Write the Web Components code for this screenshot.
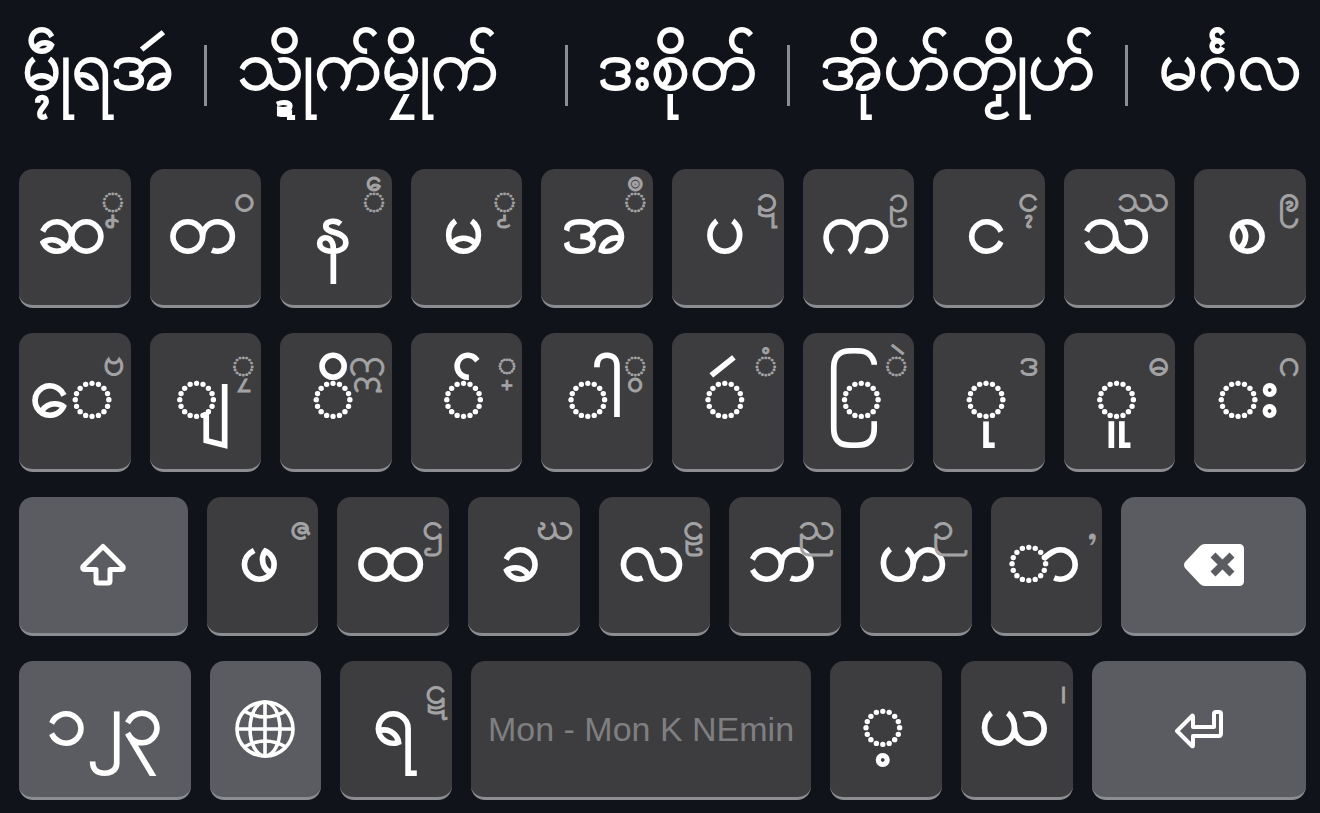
<!DOCTYPE html>
<html lang="mnw">
<head>
<meta charset="utf-8">
<title>Mon keyboard</title>
<style>
  html { background: #10131a; }
  body { margin: 0; font-family: "Padauk", "Noto Sans", sans-serif; color: #fff; }
</style>
</head>
<body>
<mon-keyboard></mon-keyboard>
<script>
const ICONS = {
  shift: '<svg width="48" height="44" viewBox="0 0 48 44" fill="none" stroke="#fff" stroke-width="5" stroke-linejoin="round"><path d="M24 3.500 L44 23.500 Q45 26.500 42 26.500 H31 V38 Q31 40 29 40 H19 Q17 40 17 38 V26.500 H6 Q3 26.500 4 23.500 Z"/></svg>',
  back: '<svg width="60" height="42" viewBox="0 0 60 42"><path fill="#fff" d="M21 0 H55 Q60 0 60 5 V37 Q60 42 55 42 H21 Q18 42 16 40 L1 24 Q-1 21 1 18 L16 2 Q18 0 21 0 Z"/><path stroke="#5b5c61" stroke-width="7" d="M29 11 L48 30 M48 11 L29 30"/></svg>',
  globe: '<svg width="60" height="58" viewBox="0 0 60 58" fill="none" stroke="#fff" stroke-width="3.600"><ellipse cx="30" cy="29" rx="28" ry="27"/><ellipse cx="30" cy="29" rx="15" ry="27"/><path d="M30 2 V56 M2 29 H58 M9 11 Q30 23 51 11 M9 47 Q30 35 51 47"/></svg>',
  enter: '<svg width="48" height="39" viewBox="0 0 48 39" fill="none" stroke="#fff" stroke-width="4" stroke-linejoin="round"><path d="M2 21 L17 6 Q18 5 18 7 V17 H39 V4 Q39 2 41 2 H44 Q46 2 46 4 V23 Q46 26 44 26 H18 V35 Q18 37 17 36 Z"/></svg>'
};

/* hints that need another family or more room on the right */
const HINT_CLASS = { 'ဉ': 'tailed', '◌္': 'looped', 'ဥ': 'looped' };

class MonKey extends HTMLElement {
  connectedCallback() {
    const root = this.attachShadow({ mode: 'open' });
    const hint = this.getAttribute('hint');
    const icon = this.getAttribute('icon');
    root.innerHTML = `
      <style>
        :host { display: block; min-width: 0; }
        button {
          position: relative; box-sizing: border-box; display: flex; align-items: center; justify-content: center;
          width: 100%; height: 139px; margin: 0; padding: 0 6px 6px 0;
          border: 0; border-bottom: 3px solid #8c8d91; border-radius: 14px;
          background: #3d3d3f; color: #fff; font: inherit; font-size: 72px; line-height: 126px;
          -webkit-text-stroke: 2px currentColor; white-space: nowrap;
        }
        :host([tone="system"]) button { background: #5b5c61; padding-right: 0; }
        :host([icon]) button { padding: 0; }
        :host([tone="space"]) button {
          padding: 0; color: #7f7f82; font-family: "Liberation Sans", Arial, sans-serif; font-size: 34px;
          -webkit-text-stroke: 0;
        }
        .hint {
          position: absolute; top: 0; right: 6px; font-size: 38px; line-height: 66px; color: #a3a3a5;
          -webkit-text-stroke: 1px currentColor;
        }
        /* the tail of this letter hangs past its advance width */
        .hint.tailed { right: 18px; }
        /* the stacker is a plus sign and the u has a closed loop in this family */
        .hint.looped { font-family: "Noto Sans Myanmar", sans-serif; font-weight: 300; font-size: 32px; line-height: 72px; }
        svg { display: block; }
      </style>
      <button type="button" ${icon ? `aria-label="${icon}"` : ''}>
        ${icon ? ICONS[icon] : '<slot></slot>'}${hint ? `<span class="hint ${HINT_CLASS[hint] || ''}">${hint}</span>` : ''}
      </button>`;
  }
}
customElements.define('mon-key', MonKey);

class SuggestionBar extends HTMLElement {
  connectedCallback() {
    const words = this.getAttribute('words').split('|');
    this.attachShadow({ mode: 'open' }).innerHTML = `
      <style>
        :host { display: flex; align-items: flex-start; height: 124px; padding-top: 45px; box-sizing: border-box; }
        button {
          flex: none; box-sizing: border-box; margin: 0; padding: 0 30px 8px; height: 61px; border: 0;
          border-left: 3px solid #8c8d91; background: none; color: inherit; font: inherit; font-size: 69px;
          line-height: 52px; text-align: left; white-space: nowrap; -webkit-text-stroke: 2px currentColor;
        }
        button:first-of-type { border-left: 0; padding-left: 22px; }
        button:nth-of-type(2) { flex-grow: 1; }
        button:last-of-type { padding-right: 18px; }
      </style>
      ${words.map(w => `<button type="button">${w}</button>`).join('')}`;
  }
}
customElements.define('suggestion-bar', SuggestionBar);

class MonKeyboard extends HTMLElement {
  connectedCallback() {
    const letters = list => list.map(([k, h]) => `<mon-key${h ? ` hint="${h}"` : ''}>${k}</mon-key>`).join('');
    this.attachShadow({ mode: 'open' }).innerHTML = `
      <style>
        :host { display: block; }
        .rows { display: grid; gap: 25px; padding: 45px 14px 12px 19px; }
        .row { display: grid; grid-template-columns: repeat(10, minmax(0, 1fr)); gap: 19px; }
        .third { grid-template-columns: 169fr repeat(7, 112fr) 185fr; }
        .fourth { grid-template-columns: 172fr 112fr 112fr 341fr 112fr 112fr 215fr; }
      </style>
      <suggestion-bar words="မ္ၚဵုရအဴ|သ္ဍိုက်မၠိုက်|ဒးစိုတ်|အိုဟ်တၟိုဟ်|မင်္ဂလ"></suggestion-bar>
      <div class="rows">
        <div class="row">${letters([['ဆ', '◌ၞ'], ['တ', 'ဝ'], ['န', '◌ဵ'], ['မ', '◌ၟ'], ['အ', '◌ဳ'], ['ပ', 'ဍ'], ['က', 'ဥ'], ['င', 'ၚ'], ['သ', 'ဿ'], ['စ', 'ဨ']])}</div>
        <div class="row">${letters([['◌ေ', 'ဗ'], ['◌ျ', '◌ၠ'], ['◌ိ', 'ဣ'], ['◌်', '◌္'], ['◌ါ', '◌ွ'], ['◌ဴ', '◌ံ'], ['◌ြ', '◌ဲ'], ['◌ု', 'ဒ'], ['◌ူ', 'ဓ'], ['◌း', 'ဂ']])}</div>
        <div class="row third"><mon-key tone="system" icon="shift"></mon-key>${letters([['ဖ', 'ဇ'], ['ထ', 'ဌ'], ['ခ', 'ဃ'], ['လ', 'ဠ'], ['ဘ', 'ည'], ['ဟ', 'ဉ'], ['◌ာ', ',']])}<mon-key tone="system" icon="back"></mon-key></div>
        <div class="row fourth"><mon-key tone="system">၁၂၃</mon-key><mon-key tone="system" icon="globe"></mon-key>${letters([['ရ', 'ဋ']])}<mon-key tone="space">Mon - Mon K NEmin</mon-key>${letters([['◌့', ''], ['ယ', '၊']])}<mon-key tone="system" icon="enter"></mon-key></div>
      </div>`;
  }
}
customElements.define('mon-keyboard', MonKeyboard);
</script>
</body>
</html>
